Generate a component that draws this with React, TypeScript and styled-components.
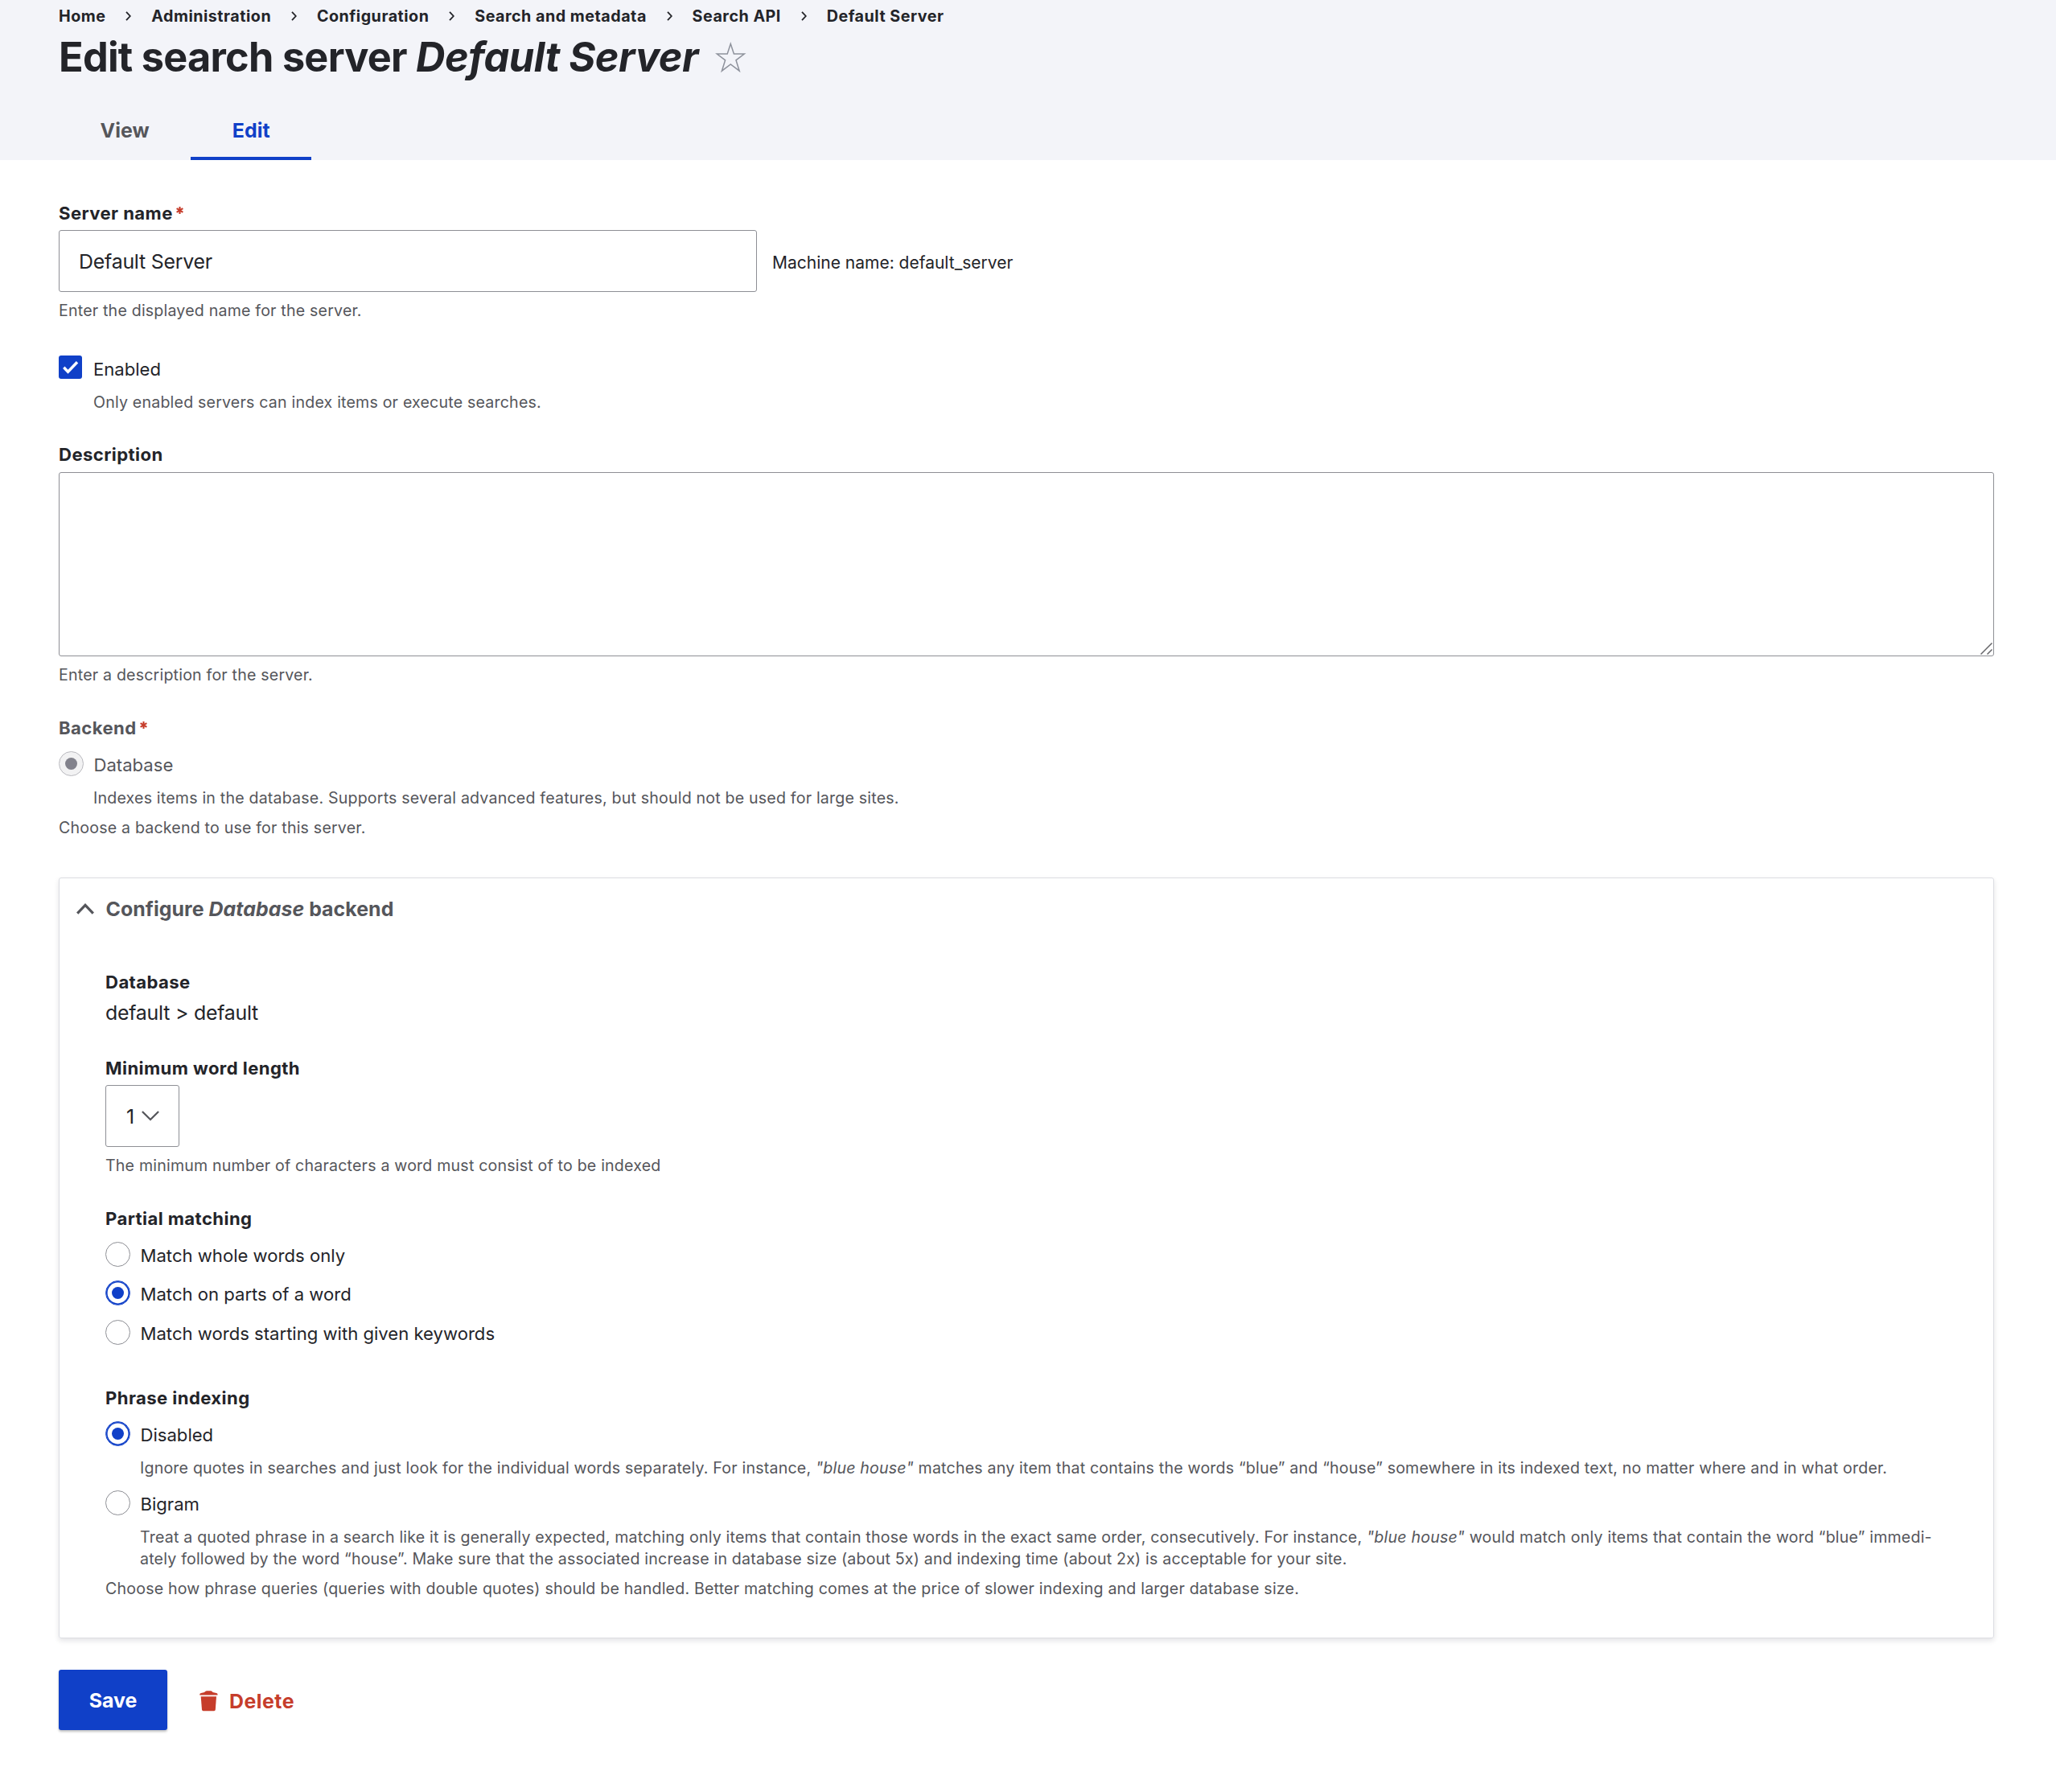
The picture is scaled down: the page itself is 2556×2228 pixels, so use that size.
import React from 'react';
import styled, { createGlobalStyle, css } from 'styled-components';

const ink = '#232429';
const muted = '#55565b';
const blue = '#1040c8';
const red = '#c63d2b';
const line = '#8e8f95';

const GlobalStyle = createGlobalStyle`
  *, *::before, *::after { box-sizing: border-box; }
  body {
    margin: 0;
    background: #fff;
    color: ${ink};
    font-family: Inter, "Liberation Sans", sans-serif;
    font-kerning: normal;
  }
  svg { display: block; flex: none; }
`;

const Page = styled.div`
  min-height: 2228px;
  background: #fff;
`;

const Header = styled.header`
  height: 199px;
  padding: 7px 73px 0;
  background: #f3f4f9;
`;

const Breadcrumb = styled.nav`
  display: flex;
  align-items: center;
  gap: 24.9px;
  height: 26px;
  font-size: 19.7px;
  font-weight: 700;
  line-height: 26px;
  letter-spacing: 0.0255em;
  white-space: nowrap;
`;

const TitleRow = styled.div`
  display: flex;
  align-items: flex-start;
  height: 60px;
  margin-top: 8px;
`;

const Title = styled.h1`
  margin: 0;
  font-size: 50.4px;
  font-weight: 700;
  line-height: 60px;
  letter-spacing: -0.0145em;
  white-space: nowrap;

  em { letter-spacing: -0.0087em; }
`;

const StarButton = styled.span`
  margin: 11px 0 0 21px;
`;

const Tabs = styled.nav`
  display: flex;
  margin-top: 28px;
`;

const Tab = styled.a<{ $active?: boolean }>`
  height: 70px;
  padding: 0 51.5px;
  border-bottom: 4px solid ${p => (p.$active ? blue : 'transparent')};
  color: ${p => (p.$active ? blue : muted)};
  font-size: 24.9px;
  font-weight: 700;
  line-height: 66px;
  letter-spacing: 0.003em;
`;

const Form = styled.form`
  display: flex;
  flex-direction: column;
  padding: 51px 77px 0 73px;
`;

const Field = styled.div<{ $gap?: number }>`
  display: flex;
  flex-direction: column;
  margin-top: ${p => p.$gap ?? 0}px;
`;

const Label = styled.div<{ $muted?: boolean; $after?: number }>`
  display: flex;
  align-items: flex-start;
  height: 30px;
  margin-bottom: ${p => p.$after ?? 6}px;
  color: ${p => (p.$muted ? muted : ink)};
  font-size: 22.1px;
  font-weight: 700;
  line-height: 30px;
  letter-spacing: 0.019em;

  svg { margin: 7px 0 0 4px; }
`;

const InputRow = styled.div`
  display: flex;
  align-items: center;
  gap: 19px;
`;

const control = css`
  border: 1px solid ${line};
  border-radius: 3px;
  background: #fff;
  color: ${ink};
  font-family: inherit;
  font-size: 24.9px;
  letter-spacing: -0.009em;
  outline: none;
`;

const TextInput = styled.input`
  ${control}
  width: 868px;
  height: 77px;
  padding: 0 24px;
`;

const MachineName = styled.span`
  padding-top: 5px;
  font-size: 21px;
  line-height: 30px;
`;

const TextAreaWrap = styled.div`
  position: relative;
  height: 229px;

  svg {
    position: absolute;
    right: 2px;
    bottom: 2px;
  }
`;

const TextArea = styled.textarea`
  ${control}
  display: block;
  width: 100%;
  height: 229px;
  padding: 18px 24px;
  resize: none;
`;

const Help = styled.div<{ $gap?: number; $indent?: boolean; $line?: number }>`
  margin-top: ${p => p.$gap ?? 10}px;
  padding-left: ${p => (p.$indent ? 43 : 0)}px;
  color: ${muted};
  font-size: 19.6px;
  line-height: ${p => p.$line ?? 26}px;
  letter-spacing: 0.0096em;
  white-space: nowrap;
`;

const Option = styled.label<{ $gap?: number; $muted?: boolean }>`
  display: flex;
  align-items: flex-start;
  height: 32px;
  margin-top: ${p => p.$gap ?? 0}px;
  color: ${p => (p.$muted ? muted : ink)};
  font-size: 22.1px;
`;

const OptionText = styled.span`
  padding-top: 2px;
  line-height: 30px;
`;

const CheckBox = styled.span`
  width: 29px;
  height: 29px;
  margin-right: 14px;
  border-radius: 3px;
  background: ${blue};
`;

const Radio = styled.span<{ $state: 'off' | 'on' | 'disabled' }>`
  display: grid;
  place-items: center;
  width: 31px;
  height: 31px;
  margin-right: 12.5px;
  border: 1px solid ${line};
  border-radius: 50%;
  background: #fff;

  ${p => p.$state === 'on' && css`
    border-color: ${blue};
    box-shadow: inset 0 0 0 1.6px ${blue};
  `}
  ${p => p.$state === 'disabled' && css`
    border-color: #bababf;
    background: #f2f2f3;
  `}

  &::after {
    content: "";
    width: 15px;
    height: 15px;
    border-radius: 50%;
    background: ${p => ({ off: 'transparent', on: blue, disabled: '#82828c' })[p.$state]};
  }
`;

const Panel = styled.section`
  height: 946px;
  margin-top: 49px;
  padding: 18px 35px 0;
  border: 1px solid #dcdde2;
  border-radius: 3px;
  box-shadow: 0 3px 6px rgba(34, 35, 48, 0.12);
`;

const Summary = styled.div`
  display: flex;
  align-items: center;
  height: 40px;
  margin: 0 0 56px -14px;
  color: ${muted};
  font-size: 24.9px;
  font-weight: 700;
  line-height: 40px;
  letter-spacing: 0.002em;
  white-space: pre;

  svg { margin-right: 14.5px; }
`;

const PanelBody = styled.div`
  display: flex;
  flex-direction: column;
  padding-left: 22px;
`;

const Value = styled.div`
  font-size: 24.9px;
  line-height: 36px;
  letter-spacing: -0.0096em;
`;

const Select = styled.div`
  ${control}
  display: flex;
  align-items: center;
  width: 92px;
  height: 77px;
  padding-left: 25px;
`;

const SelectValue = styled.span`
  width: 19px;
`;

const Actions = styled.div`
  display: flex;
  align-items: center;
  margin-top: 39px;
  font-size: 24.9px;
  font-weight: 700;
`;

const SaveButton = styled.button`
  width: 135px;
  height: 75px;
  padding: 0;
  border: 0;
  border-radius: 3px;
  background: ${blue};
  box-shadow: 0 2px 3px rgba(0, 0, 0, 0.25);
  color: #fff;
  font: inherit;
`;

const DeleteLink = styled.a`
  display: flex;
  align-items: center;
  margin-left: 40px;
  padding-top: 2px;
  color: ${red};
  letter-spacing: 0.02em;

  svg { margin-right: 14px; }
`;

const Separator = () => (
  <svg width="7" height="12" viewBox="0 0 7 12" fill="none" stroke={ink} strokeWidth="1.8">
    <path d="M1 .8 5.8 6 1 11.2" />
  </svg>
);

const Star = () => (
  <svg width="39" height="39" viewBox="0 0 39 39" fill="none" stroke="#8e929c" strokeWidth="1.5">
    <path d="M19.3 2.5 23.4 15H36.3L26 22.8 30.2 36.2 19.3 28 8.4 36.2 12.6 22.8 2.3 15H15.2Z" />
  </svg>
);

const Required = () => (
  <svg width="9" height="9" viewBox="0 0 9 9" stroke={red} strokeWidth="2.1">
    <path d="M4.5 0V9M.6 2.2 8.4 6.8M8.4 2.2.6 6.8" />
  </svg>
);

const Check = () => (
  <svg width="29" height="29" viewBox="0 0 29 29" fill="none" stroke="#fff" strokeWidth="3.4">
    <path d="M6.3 14.8 11.5 20.2 23 8.3" />
  </svg>
);

const Grip = () => (
  <svg width="15" height="15" viewBox="0 0 15 15" stroke="#66666a" strokeWidth="1.5">
    <path d="M.5 14.5 14.5.5M8.5 14.5 14.5 8.5" />
  </svg>
);

const ChevronUp = () => (
  <svg width="22" height="14" viewBox="0 0 22 14" fill="none" stroke={muted} strokeWidth="3.2">
    <path d="M1.2 12.6 11 2.4 20.8 12.6" />
  </svg>
);

const ChevronDown = () => (
  <svg width="22" height="13" viewBox="0 0 22 13" fill="none" stroke={muted} strokeWidth="2.3">
    <path d="M.9 1 11 11 21.1 1" />
  </svg>
);

const Trash = () => (
  <svg width="23" height="26" viewBox="0 0 23 26" fill={red}>
    <path d="M.3 5.4V4.2Q.6 3 2 2.9L6.2 1.9Q7.4.2 9 .2H14Q15.6.2 16.6 1.9L21 2.9Q22.3 3 22.5 4.2V5.4Z" />
    <path d="M1.7 7.2H21L19.8 23.6Q19.6 25.2 18.2 25.2H4.6Q3.2 25.2 3 23.6Z" />
  </svg>
);

const crumbs = ['Home', 'Administration', 'Configuration', 'Search and metadata', 'Search API', 'Default Server'];

const matching = [
  { text: 'Match whole words only', on: false, gap: 0 },
  { text: 'Match on parts of a word', on: true, gap: 16 },
  { text: 'Match words starting with given keywords', on: false, gap: 17 },
];

export default function App() {
  return (
    <Page>
      <GlobalStyle />
      <Header>
        <Breadcrumb>
          {crumbs.map((c, i) => (
            <React.Fragment key={c}>
              {i > 0 && <Separator />}
              <span>{c}</span>
            </React.Fragment>
          ))}
        </Breadcrumb>
        <TitleRow>
          <Title>Edit search server <em>Default Server</em></Title>
          <StarButton><Star /></StarButton>
        </TitleRow>
        <Tabs>
          <Tab>View</Tab>
          <Tab $active>Edit</Tab>
        </Tabs>
      </Header>

      <Form>
        <Field>
          <Label>Server name<Required /></Label>
          <InputRow>
            <TextInput defaultValue="Default Server" />
            <MachineName>Machine name: default_server</MachineName>
          </InputRow>
          <Help>Enter the displayed name for the server.</Help>
        </Field>

        <Field $gap={43}>
          <Option>
            <CheckBox><Check /></CheckBox>
            <OptionText>Enabled</OptionText>
          </Option>
          <Help $gap={13} $indent>Only enabled servers can index items or execute searches.</Help>
        </Field>

        <Field $gap={37}>
          <Label $after={7}>Description</Label>
          <TextAreaWrap>
            <TextArea />
            <Grip />
          </TextAreaWrap>
          <Help>Enter a description for the server.</Help>
        </Field>

        <Field $gap={38}>
          <Label $muted $after={14}>Backend<Required /></Label>
          <Option $muted>
            <Radio $state="disabled" />
            <OptionText>Database</OptionText>
          </Option>
          <Help $gap={13} $indent>
            Indexes items in the database. Supports several advanced features, but should not be used for large sites.
          </Help>
          <Help $gap={11}>Choose a backend to use for this server.</Help>
        </Field>

        <Panel>
          <Summary>
            <ChevronUp />
            <span>Configure <em>Database</em> backend</span>
          </Summary>
          <PanelBody>
            <Field>
              <Label $after={5}>Database</Label>
              <Value>default &gt; default</Value>
            </Field>

            <Field $gap={36}>
              <Label>Minimum word length</Label>
              <Select>
                <SelectValue>1</SelectValue>
                <ChevronDown />
              </Select>
              <Help>The minimum number of characters a word must consist of to be indexed</Help>
            </Field>

            <Field $gap={38}>
              <Label $after={14}>Partial matching</Label>
              {matching.map(m => (
                <Option key={m.text} $gap={m.gap}>
                  <Radio $state={m.on ? 'on' : 'off'} />
                  <OptionText>{m.text}</OptionText>
                </Option>
              ))}
            </Field>

            <Field $gap={50}>
              <Label $after={14}>Phrase indexing</Label>
              <Option>
                <Radio $state="on" />
                <OptionText>Disabled</OptionText>
              </Option>
              <Help $gap={13} $indent>
                Ignore quotes in searches and just look for the individual words separately. For instance, <em>"blue house"</em> matches any item that contains the words “blue” and “house” somewhere in its indexed text, no matter where and in what order.
              </Help>
              <Option $gap={15}>
                <Radio $state="off" />
                <OptionText>Bigram</OptionText>
              </Option>
              <Help $gap={13} $indent $line={27}>
                Treat a quoted phrase in a search like it is generally expected, matching only items that contain those words in the exact same order, consecutively. For instance, <em>"blue house"</em> would match only items that contain the word “blue” immedi-<br />
                ately followed by the word “house”. Make sure that the associated increase in database size (about 5x) and indexing time (about 2x) is acceptable for your site.
              </Help>
              <Help>
                Choose how phrase queries (queries with double quotes) should be handled. Better matching comes at the price of slower indexing and larger database size.
              </Help>
            </Field>
          </PanelBody>
        </Panel>

        <Actions>
          <SaveButton type="button">Save</SaveButton>
          <DeleteLink><Trash />Delete</DeleteLink>
        </Actions>
      </Form>
    </Page>
  );
}
